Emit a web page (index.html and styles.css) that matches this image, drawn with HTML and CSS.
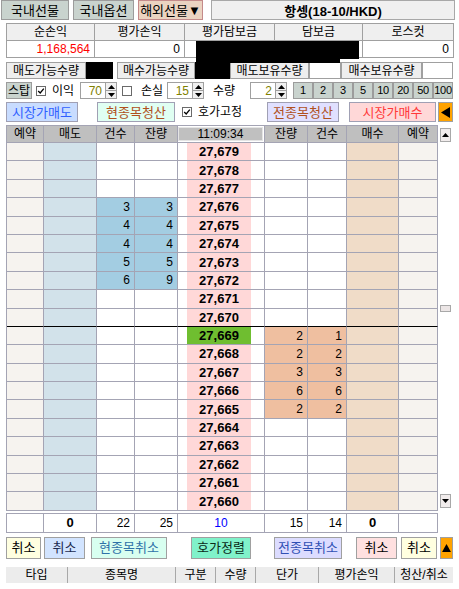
FILE: index.html
```html
<!DOCTYPE html>
<html lang="ko">
<head>
<meta charset="utf-8">
<title>해외선물 주문</title>
<link rel="stylesheet" href="styles.css">
</head>
<body>
<div class="screen">
  <div class="tabs">
    <div class="tab tab-1">국내선물</div>
    <div class="tab tab-2">국내옵션</div>
    <div class="tab tab-3">해외선물▼</div>
    <div class="title">항셍(18-10/HKD)</div>
  </div>

  <div class="summary">
    <div class="sum-h sc1">순손익</div>
    <div class="sum-h">평가손익</div>
    <div class="sum-h">평가담보금</div>
    <div class="sum-h">담보금</div>
    <div class="sum-h">로스컷</div>
    <div class="sum-v red">1,168,564</div>
    <div class="sum-v">0</div>
    <div class="sum-v"></div>
    <div class="sum-v"></div>
    <div class="sum-v">0</div>
    <div class="redact redact-a"></div>
    <div class="redact redact-b"></div>
  </div>

  <div class="qty-row">
    <div class="ql w80">매도가능수량</div>
    <div class="qv w27 masked"></div>
    <div class="ql w78 ml4">매수가능수량</div>
    <div class="qv w35 masked"></div>
    <div class="ql w79">매도보유수량</div>
    <div class="qv w32"></div>
    <div class="ql w81">매수보유수량</div>
    <div class="qv w31"></div>
  </div>

  <div class="opt-row">
    <div class="btn-gray w26">스탑</div>
    <span class="chk ml4"><svg viewBox="0 0 10 10" width="8" height="8"><polyline points="1.5,5 4,7.5 8.5,2" fill="none" stroke="#000" stroke-width="1.6"/></svg></span>
    <span class="opt-label ml6 w28">이익</span>
    <div class="spin"><div class="spin-val">70</div><div class="spin-btns"><span class="sb"><svg viewBox="0 0 7 4" width="7" height="4"><polygon points="0,4 3.5,0 7,4" fill="#000"/></svg></span><span class="sb"><svg viewBox="0 0 7 4" width="7" height="4"><polygon points="0,0 7,0 3.5,4" fill="#000"/></svg></span></div></div>
    <span class="chk ml5"></span>
    <span class="opt-label ml9 w26">손실</span>
    <div class="spin"><div class="spin-val">15</div><div class="spin-btns"><span class="sb"><svg viewBox="0 0 7 4" width="7" height="4"><polygon points="0,4 3.5,0 7,4" fill="#000"/></svg></span><span class="sb"><svg viewBox="0 0 7 4" width="7" height="4"><polygon points="0,0 7,0 3.5,4" fill="#000"/></svg></span></div></div>
    <span class="opt-label ml9 w37">수량</span>
    <div class="spin"><div class="spin-val">2</div><div class="spin-btns"><span class="sb"><svg viewBox="0 0 7 4" width="7" height="4"><polygon points="0,4 3.5,0 7,4" fill="#000"/></svg></span><span class="sb"><svg viewBox="0 0 7 4" width="7" height="4"><polygon points="0,0 7,0 3.5,4" fill="#000"/></svg></span></div></div>
    <div class="qbtns">
      <div class="btn-gray qb">1</div>
      <div class="btn-gray qb">2</div>
      <div class="btn-gray qb">3</div>
      <div class="btn-gray qb">5</div>
      <div class="btn-gray qb">10</div>
      <div class="btn-gray qb">20</div>
      <div class="btn-gray qb">50</div>
      <div class="btn-gray qb">100</div>
    </div>
  </div>

  <div class="act-row">
    <div class="abtn a-sell">시장가매도</div>
    <div class="abtn a-cur">현종목청산</div>
    <span class="chk chk-fix"><svg viewBox="0 0 10 10" width="8" height="8"><polyline points="1.5,5 4,7.5 8.5,2" fill="none" stroke="#000" stroke-width="1.6"/></svg></span>
    <span class="fix-label">호가고정</span>
    <div class="abtn a-all">전종목청산</div>
    <div class="abtn a-buy">시장가매수</div>
    <div class="abtn a-arrow"><svg viewBox="0 0 10 12" width="9" height="11"><polygon points="0,6 10,0 10,12" fill="#000"/></svg></div>
  </div>

  <div class="book-wrap">
    <div class="book">
      <div class="bhead">
        <div class="h">예약</div>
        <div class="h">매도</div>
        <div class="h">건수</div>
        <div class="h">잔량</div>
        <div class="h hmid"><div class="time">11:09:34</div></div>
        <div class="h">잔량</div>
        <div class="h">건수</div>
        <div class="h">매수</div>
        <div class="h">예약</div>
      </div>

      <div class="brow"><div class="c res"></div><div class="c sell"></div><div class="c"></div><div class="c"></div><div class="c mid"><div class="price">27,679</div></div><div class="c"></div><div class="c"></div><div class="c buy"></div><div class="c res"></div></div>
      <div class="brow"><div class="c res"></div><div class="c sell"></div><div class="c"></div><div class="c"></div><div class="c mid"><div class="price">27,678</div></div><div class="c"></div><div class="c"></div><div class="c buy"></div><div class="c res"></div></div>
      <div class="brow"><div class="c res"></div><div class="c sell"></div><div class="c"></div><div class="c"></div><div class="c mid"><div class="price">27,677</div></div><div class="c"></div><div class="c"></div><div class="c buy"></div><div class="c res"></div></div>
      <div class="brow"><div class="c res"></div><div class="c sell"></div><div class="c fs">3</div><div class="c fs">3</div><div class="c mid"><div class="price">27,676</div></div><div class="c"></div><div class="c"></div><div class="c buy"></div><div class="c res"></div></div>
      <div class="brow"><div class="c res"></div><div class="c sell"></div><div class="c fs">4</div><div class="c fs">4</div><div class="c mid"><div class="price">27,675</div></div><div class="c"></div><div class="c"></div><div class="c buy"></div><div class="c res"></div></div>
      <div class="brow"><div class="c res"></div><div class="c sell"></div><div class="c fs">4</div><div class="c fs">4</div><div class="c mid"><div class="price">27,674</div></div><div class="c"></div><div class="c"></div><div class="c buy"></div><div class="c res"></div></div>
      <div class="brow"><div class="c res"></div><div class="c sell"></div><div class="c fs">5</div><div class="c fs">5</div><div class="c mid"><div class="price">27,673</div></div><div class="c"></div><div class="c"></div><div class="c buy"></div><div class="c res"></div></div>
      <div class="brow"><div class="c res"></div><div class="c sell"></div><div class="c fs">6</div><div class="c fs">9</div><div class="c mid"><div class="price">27,672</div></div><div class="c"></div><div class="c"></div><div class="c buy"></div><div class="c res"></div></div>
      <div class="brow"><div class="c res"></div><div class="c sell"></div><div class="c"></div><div class="c"></div><div class="c mid"><div class="price">27,671</div></div><div class="c"></div><div class="c"></div><div class="c buy"></div><div class="c res"></div></div>
      <div class="brow mark"><div class="c res"></div><div class="c sell"></div><div class="c"></div><div class="c"></div><div class="c mid"><div class="price">27,670</div></div><div class="c"></div><div class="c"></div><div class="c buy"></div><div class="c res"></div></div>
      <div class="brow"><div class="c res"></div><div class="c sell"></div><div class="c"></div><div class="c"></div><div class="c mid"><div class="price now">27,669</div></div><div class="c fb">2</div><div class="c fb">1</div><div class="c buy"></div><div class="c res"></div></div>
      <div class="brow"><div class="c res"></div><div class="c sell"></div><div class="c"></div><div class="c"></div><div class="c mid"><div class="price">27,668</div></div><div class="c fb">2</div><div class="c fb">2</div><div class="c buy"></div><div class="c res"></div></div>
      <div class="brow"><div class="c res"></div><div class="c sell"></div><div class="c"></div><div class="c"></div><div class="c mid"><div class="price">27,667</div></div><div class="c fb">3</div><div class="c fb">3</div><div class="c buy"></div><div class="c res"></div></div>
      <div class="brow"><div class="c res"></div><div class="c sell"></div><div class="c"></div><div class="c"></div><div class="c mid"><div class="price">27,666</div></div><div class="c fb">6</div><div class="c fb">6</div><div class="c buy"></div><div class="c res"></div></div>
      <div class="brow"><div class="c res"></div><div class="c sell"></div><div class="c"></div><div class="c"></div><div class="c mid"><div class="price">27,665</div></div><div class="c fb">2</div><div class="c fb">2</div><div class="c buy"></div><div class="c res"></div></div>
      <div class="brow"><div class="c res"></div><div class="c sell"></div><div class="c"></div><div class="c"></div><div class="c mid"><div class="price">27,664</div></div><div class="c"></div><div class="c"></div><div class="c buy"></div><div class="c res"></div></div>
      <div class="brow"><div class="c res"></div><div class="c sell"></div><div class="c"></div><div class="c"></div><div class="c mid"><div class="price">27,663</div></div><div class="c"></div><div class="c"></div><div class="c buy"></div><div class="c res"></div></div>
      <div class="brow"><div class="c res"></div><div class="c sell"></div><div class="c"></div><div class="c"></div><div class="c mid"><div class="price">27,662</div></div><div class="c"></div><div class="c"></div><div class="c buy"></div><div class="c res"></div></div>
      <div class="brow"><div class="c res"></div><div class="c sell"></div><div class="c"></div><div class="c"></div><div class="c mid"><div class="price">27,661</div></div><div class="c"></div><div class="c"></div><div class="c buy"></div><div class="c res"></div></div>
      <div class="brow"><div class="c res"></div><div class="c sell"></div><div class="c"></div><div class="c"></div><div class="c mid"><div class="price">27,660</div></div><div class="c"></div><div class="c"></div><div class="c buy"></div><div class="c res"></div></div>
    </div>
    <div class="scroll">
      <div class="sbtn"><svg viewBox="0 0 7 4" width="7" height="4"><polygon points="0,4 3.5,0 7,4" fill="#000"/></svg></div>
      <div class="thumb"></div>
      <div class="sbtn sbtn-down"><svg viewBox="0 0 7 4" width="7" height="4"><polygon points="0,0 7,0 3.5,4" fill="#000"/></svg></div>
    </div>
  </div>

  <div class="totals">
    <div class="t"></div>
    <div class="t tb">0</div>
    <div class="t tr">22</div>
    <div class="t tr">25</div>
    <div class="t tc blue">10</div>
    <div class="t tr">15</div>
    <div class="t tr">14</div>
    <div class="t tb">0</div>
    <div class="t"></div>
  </div>

  <div class="cancel-row">
    <div class="cbtn c-y1">취소</div>
    <div class="cbtn c-b">취소</div>
    <div class="cbtn c-cur">현종목취소</div>
    <div class="cbtn c-sort">호가정렬</div>
    <div class="cbtn c-all">전종목취소</div>
    <div class="cbtn c-p">취소</div>
    <div class="cbtn c-y2">취소</div>
    <div class="cbtn c-up"><svg viewBox="0 0 10 9" width="9" height="8"><polygon points="0,9 5,0 10,9" fill="#000"/></svg></div>
  </div>

  <div class="list-head">
    <div class="lh w62">타입</div>
    <div class="lh w108">종목명</div>
    <div class="lh w40">구분</div>
    <div class="lh w40">수량</div>
    <div class="lh w63">단가</div>
    <div class="lh w76">평가손익</div>
    <div class="lh w58">청산/취소</div>
  </div>
</div>
</body>
</html>
```

FILE: styles.css
```css
* { box-sizing: border-box; }
body {
  margin: 0;
  background: #ffffff;
  font-family: "Liberation Sans", "Noto Sans CJK KR", sans-serif;
  font-size: 12px;
  color: #000;
}
.screen {
  position: relative;
  width: 459px;
  height: 589px;
  overflow: hidden;
}

/* ---------- tabs ---------- */
.tabs { display: flex; height: 20px; margin-left: 1px; }
.tab {
  height: 20px;
  border: 1px solid #9c9c9c;
  background: #c9d3ce;
  font-size: 13px;
  line-height: 1;
  display: flex;
  align-items: center;
  justify-content: center;
  margin-right: 4px;
}
.tab-1 { width: 68px; }
.tab-2 { width: 61px; }
.tab-3 { width: 65px; background: #ebd3c1; border-color: #c48a8a; margin-right: 8px; }
.title {
  width: 244px;
  height: 20px;
  border: 1px solid #a8a8a8;
  background: #f0f0f0;
  font-weight: bold;
  font-size: 13px;
  display: flex;
  align-items: center;
  justify-content: center;
}

/* ---------- summary ---------- */
.summary {
  position: relative;
  margin: 3px 0 0 6px;
  width: 448px;
  display: grid;
  grid-template-columns: 88px 90px 90px 88px 91px;
  border-left: 1px solid #a0a0a0;
  border-top: 1px solid #a0a0a0;
}
.sum-h, .sum-v {
  height: 17px;
  border-right: 1px solid #a0a0a0;
  border-bottom: 1px solid #a0a0a0;
  display: flex;
  align-items: center;
  line-height: 1;
}
.sum-h { background: #efefef; justify-content: center; }
.sum-v { background: #fff; justify-content: flex-end; padding-right: 4px; }
.red { color: #ff0000; }
.redact { position: absolute; background: #000; }
.redact-a { left: 189px; top: 17px; width: 163px; height: 18px; }
.redact-b { left: 189px; top: 34px; width: 144px; height: 5px; }

/* ---------- quantity row ---------- */
.qty-row { display: flex; margin: 4px 0 0 6px; height: 17px; }
.ql {
  border: 1px solid #a0a0a0;
  background: #eeeeee;
  display: flex;
  align-items: center;
  justify-content: center;
  line-height: 1;
}
.qv { border: 1px solid #a0a0a0; background: #fff; }
.qv.masked { background: #000; border-color: #000; }
.w26 { width: 26px; } .w27 { width: 27px; } .w28 { width: 28px; } .w31 { width: 31px; }
.w32 { width: 32px; } .w35 { width: 35px; } .w37 { width: 37px; } .w40 { width: 40px; }
.w58 { width: 58px; } .w62 { width: 62px; } .w63 { width: 63px; } .w76 { width: 76px; }
.w78 { width: 78px; } .w79 { width: 79px; } .w80 { width: 80px; } .w81 { width: 81px; }
.w108 { width: 108px; }
.ml4 { margin-left: 4px; } .ml5 { margin-left: 5px; } .ml6 { margin-left: 6px; } .ml9 { margin-left: 9px; }

/* ---------- option row ---------- */
.opt-row { display: flex; align-items: center; margin: 3px 0 0 6px; height: 17px; }
.btn-gray {
  height: 17px;
  border: 1px solid #9c9c9c;
  background: #c9d3ce;
  display: flex;
  align-items: center;
  justify-content: center;
  line-height: 1;
}
.chk {
  width: 10px;
  height: 10px;
  border: 1px solid #6a6a6a;
  background: #fff;
  display: flex;
  align-items: center;
  justify-content: center;
}
.opt-label { line-height: 1; font-size: 12px; }
.spin { display: flex; height: 17px; }
.spin-val {
  width: 26px;
  border: 1px solid #a0a0a0;
  background: #fff;
  color: #808000;
  display: flex;
  align-items: center;
  justify-content: flex-end;
  padding-right: 3px;
  line-height: 1;
}
.spin-btns { width: 11px; display: flex; flex-direction: column; }
.sb {
  flex: 1;
  border: 1px solid #a0a0a0;
  border-left: none;
  background: #f0f0f0;
  display: flex;
  align-items: center;
  justify-content: center;
}
.sb + .sb { border-top: none; }
.qbtns { display: flex; margin-left: 6px; }
.qb { width: 20px; font-size: 11px; letter-spacing: -0.3px; }

/* ---------- action row ---------- */
.act-row { display: flex; align-items: center; margin: 3px 0 0 6px; height: 20px; }
.abtn {
  height: 20px;
  border: 1px solid #a0a0b4;
  display: flex;
  align-items: center;
  justify-content: center;
  font-size: 13px;
  line-height: 1;
}
.a-sell { width: 72px; background: #c8dcff; color: #2f5fff; }
.a-cur { width: 78px; margin-left: 19px; background: #e0fff2; color: #b0501c; }
.chk-fix { margin-left: 7px; }
.fix-label { width: 69px; margin-left: 6px; font-size: 12px; line-height: 1; }
.a-all { width: 72px; background: #e0e0ff; color: #b0501c; }
.a-buy { width: 87px; margin-left: 10px; background: #ffd8d8; color: #ff3838; }
.a-arrow { width: 15px; margin-left: 2px; background: #ffa300; border-color: #a0a0a0; }

/* ---------- order book ---------- */
.book-wrap { display: flex; margin: 3px 0 0 6px; }
.book {
  width: 432px;
  border-left: 1px solid #a4a4b4;
  border-top: 1px solid #a4a4b4;
}
.bhead, .brow, .totals {
  display: grid;
  grid-template-columns: 37px 53px 38px 43px 87px 43px 39px 52px 39px;
}
.h {
  height: 17px;
  background: #bfbfbf;
  border-right: 1px solid #a4a4b4;
  border-bottom: 1px solid #a4a4b4;
  display: flex;
  align-items: center;
  justify-content: center;
  line-height: 1;
  font-size: 12px;
}
.hmid { background: #fff; padding: 1px 1px 1px 0; }
.time {
  width: 100%;
  height: 100%;
  background: #c0c0c0;
  border: 1px solid #e4e4e4;
  display: flex;
  align-items: center;
  justify-content: center;
  font-size: 12px;
}
.brow { height: 18.4px; }
.c {
  border-right: 1px solid #a4a4b4;
  border-bottom: 1px solid #a4a4b4;
  background: #fff;
  display: flex;
  align-items: center;
  justify-content: flex-end;
  padding-right: 4px;
  line-height: 1;
  font-size: 12px;
}
.mark .c { border-bottom-color: #000; }
.res { background: #f6f3ef; }
.sell { background: #d2e2ea; }
.buy { background: #f0dcc8; }
.fs { background: #a3cde2; }
.fb { background: #efbfa0; }
.mid { padding: 0 0 0 9px; justify-content: flex-start; align-items: stretch; }
.price {
  width: 64px;
  background: #ffd8d8;
  font-weight: bold;
  font-size: 13px;
  display: flex;
  align-items: center;
  justify-content: center;
}
.price.now { background: #6fbe30; }

.scroll {
  width: 16px;
  display: flex;
  flex-direction: column;
  padding: 3px 3px 3px 2px;
}
.sbtn {
  width: 11px;
  height: 14px;
  border: 1px solid #a8a8a8;
  background: #f1ecec;
  display: flex;
  align-items: center;
  justify-content: center;
}
.thumb {
  width: 11px;
  height: 7px;
  margin-top: 163px;
  border: 1px solid #a8a8a8;
  background: #ece6e6;
}
.sbtn-down { margin-top: auto; }

/* ---------- totals ---------- */
.totals {
  margin: 2px 0 0 6px;
  width: 432px;
  border-left: 1px solid #a4a4b4;
  border-top: 1px solid #a4a4b4;
}
.t {
  height: 19px;
  border-right: 1px solid #a4a4b4;
  border-bottom: 1px solid #a4a4b4;
  display: flex;
  align-items: center;
  justify-content: flex-end;
  padding-right: 4px;
  line-height: 1;
  font-size: 12px;
}
.tb { font-weight: bold; justify-content: center; padding: 0; font-size: 13px; }
.tc { justify-content: center; padding: 0; }
.blue { color: #0000ff; }

/* ---------- cancel row ---------- */
.cancel-row { display: flex; align-items: center; margin: 4px 0 0 6px; height: 22px; }
.cbtn {
  height: 22px;
  border: 1px solid #a0a0a0;
  display: flex;
  align-items: center;
  justify-content: center;
  font-size: 13px;
  line-height: 1;
}
.c-y1 { width: 35px; background: #ffffe0; }
.c-b { width: 41px; margin-left: 3px; background: #d2e4ff; color: #1a2a50; }
.c-cur { width: 76px; margin-left: 6px; background: #d8fff0; color: #2f72a8; }
.c-sort { width: 60px; margin-left: 24px; background: #80f2ca; color: #0b2a18; }
.c-all { width: 68px; margin-left: 23px; background: #dcdcff; color: #3050b4; }
.c-p { width: 41px; margin-left: 14px; background: #ffe0e0; }
.c-y2 { width: 36px; margin-left: 4px; background: #ffffe0; }
.c-up { width: 13px; margin-left: 3px; background: #ffa300; }

/* ---------- list header ---------- */
.list-head { display: flex; margin: 8px 0 0 6px; height: 16px; }
.lh {
  height: 16px;
  background: #ececec;
  border-right: 1px solid #a8a8a8;
  display: flex;
  align-items: center;
  justify-content: center;
  font-size: 12px;
  line-height: 1;
}
.lh:last-child { border-right: none; }
```
